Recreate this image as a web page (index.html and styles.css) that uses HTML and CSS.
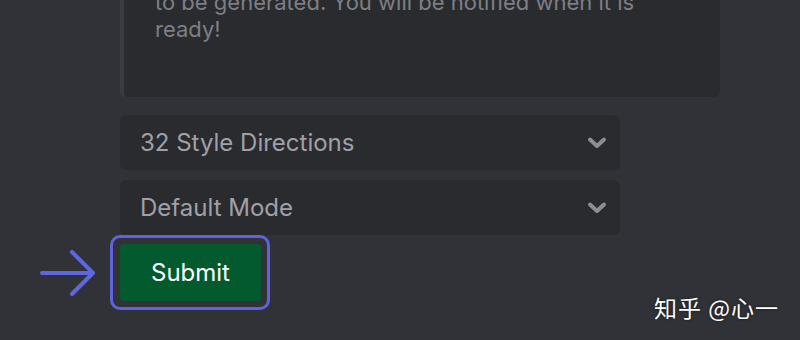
FILE: index.html
```html
<!DOCTYPE html>
<html lang="en">
<head>
<meta charset="utf-8">
<link rel="stylesheet" href="styles.css">
</head>
<body>
<div class="page">
  <div class="note">
    <p>to be generated. You will be notified when it is<br>ready!</p>
  </div>
  <div class="selects">
    <div class="select"><span>32 Style Directions</span>
      <svg class="chev" width="20" height="14" viewBox="0 0 20 14"><path d="M3 3.5 L10 10 L17 3.5" fill="none" stroke="#8d8e93" stroke-width="4" stroke-linecap="round" stroke-linejoin="round"/></svg>
    </div>
    <div class="select"><span>Default Mode</span>
      <svg class="chev" width="20" height="14" viewBox="0 0 20 14"><path d="M3 3.5 L10 10 L17 3.5" fill="none" stroke="#8d8e93" stroke-width="4" stroke-linecap="round" stroke-linejoin="round"/></svg>
    </div>
  </div>
  <div class="submit-row">
    <svg class="arrow" width="56" height="46" viewBox="0 0 56 46"><path d="M2 23 H53 M32 2 L53 23 L32 44" fill="none" stroke="#5f67e0" stroke-width="4" stroke-linecap="round" stroke-linejoin="round"/></svg>
    <div class="ring"><button class="submit">Submit</button></div>
  </div>
</div>
<div class="watermark">知乎 @心一</div>
</body>
</html>
```
FILE: styles.css
```css
html, body {
  margin: 0;
  padding: 0;
}
body {
  width: 800px;
  height: 340px;
  overflow: hidden;
  background: #313237;
  font-family: Inter, "Noto Sans", sans-serif;
  position: relative;
}
.page {
  padding-left: 120px;
}
.note {
  box-sizing: border-box;
  width: 600px;
  height: 97px;
  background: #2a2b2f;
  border-left: 4px solid #3b3c41;
  border-radius: 0 0 6px 6px;
  overflow: hidden;
}
.note p {
  margin: -11px 0 0 31px;
  font-size: 22px;
  line-height: 27px;
  color: #7e7f84;
}
.selects {
  margin-top: 18px;
  display: flex;
  flex-direction: column;
  gap: 10px;
  width: 500px;
}
.select {
  box-sizing: border-box;
  height: 55px;
  background: #2a2b2f;
  border-radius: 6px;
  display: flex;
  align-items: center;
  justify-content: space-between;
  padding: 0 13px 0 20px;
  font-size: 24px;
  color: #a0a1a6;
}
.chev {
  display: block;
}
.submit-row {
  display: flex;
  align-items: center;
  margin-left: -80px;
  gap: 14px;
}
.arrow {
  display: block;
}
.ring {
  border: 3px solid #5d64dc;
  border-radius: 10px;
  padding: 6px 6px 6px 7px;
  display: flex;
}
.submit {
  width: 141px;
  height: 57px;
  border: none;
  border-radius: 4px;
  background: #045a2f;
  color: #ffffff;
  font-family: Inter, "Noto Sans", sans-serif;
  font-size: 24px;
  font-weight: 400;
  padding: 0;
}
.watermark {
  position: absolute;
  left: 654px;
  top: 290px;
  font-family: "Noto Sans CJK SC", sans-serif;
  font-size: 23px;
  color: #ffffff;
  text-shadow: 0 0 3px rgba(0,0,0,0.6);
  letter-spacing: 1px;
}
```
